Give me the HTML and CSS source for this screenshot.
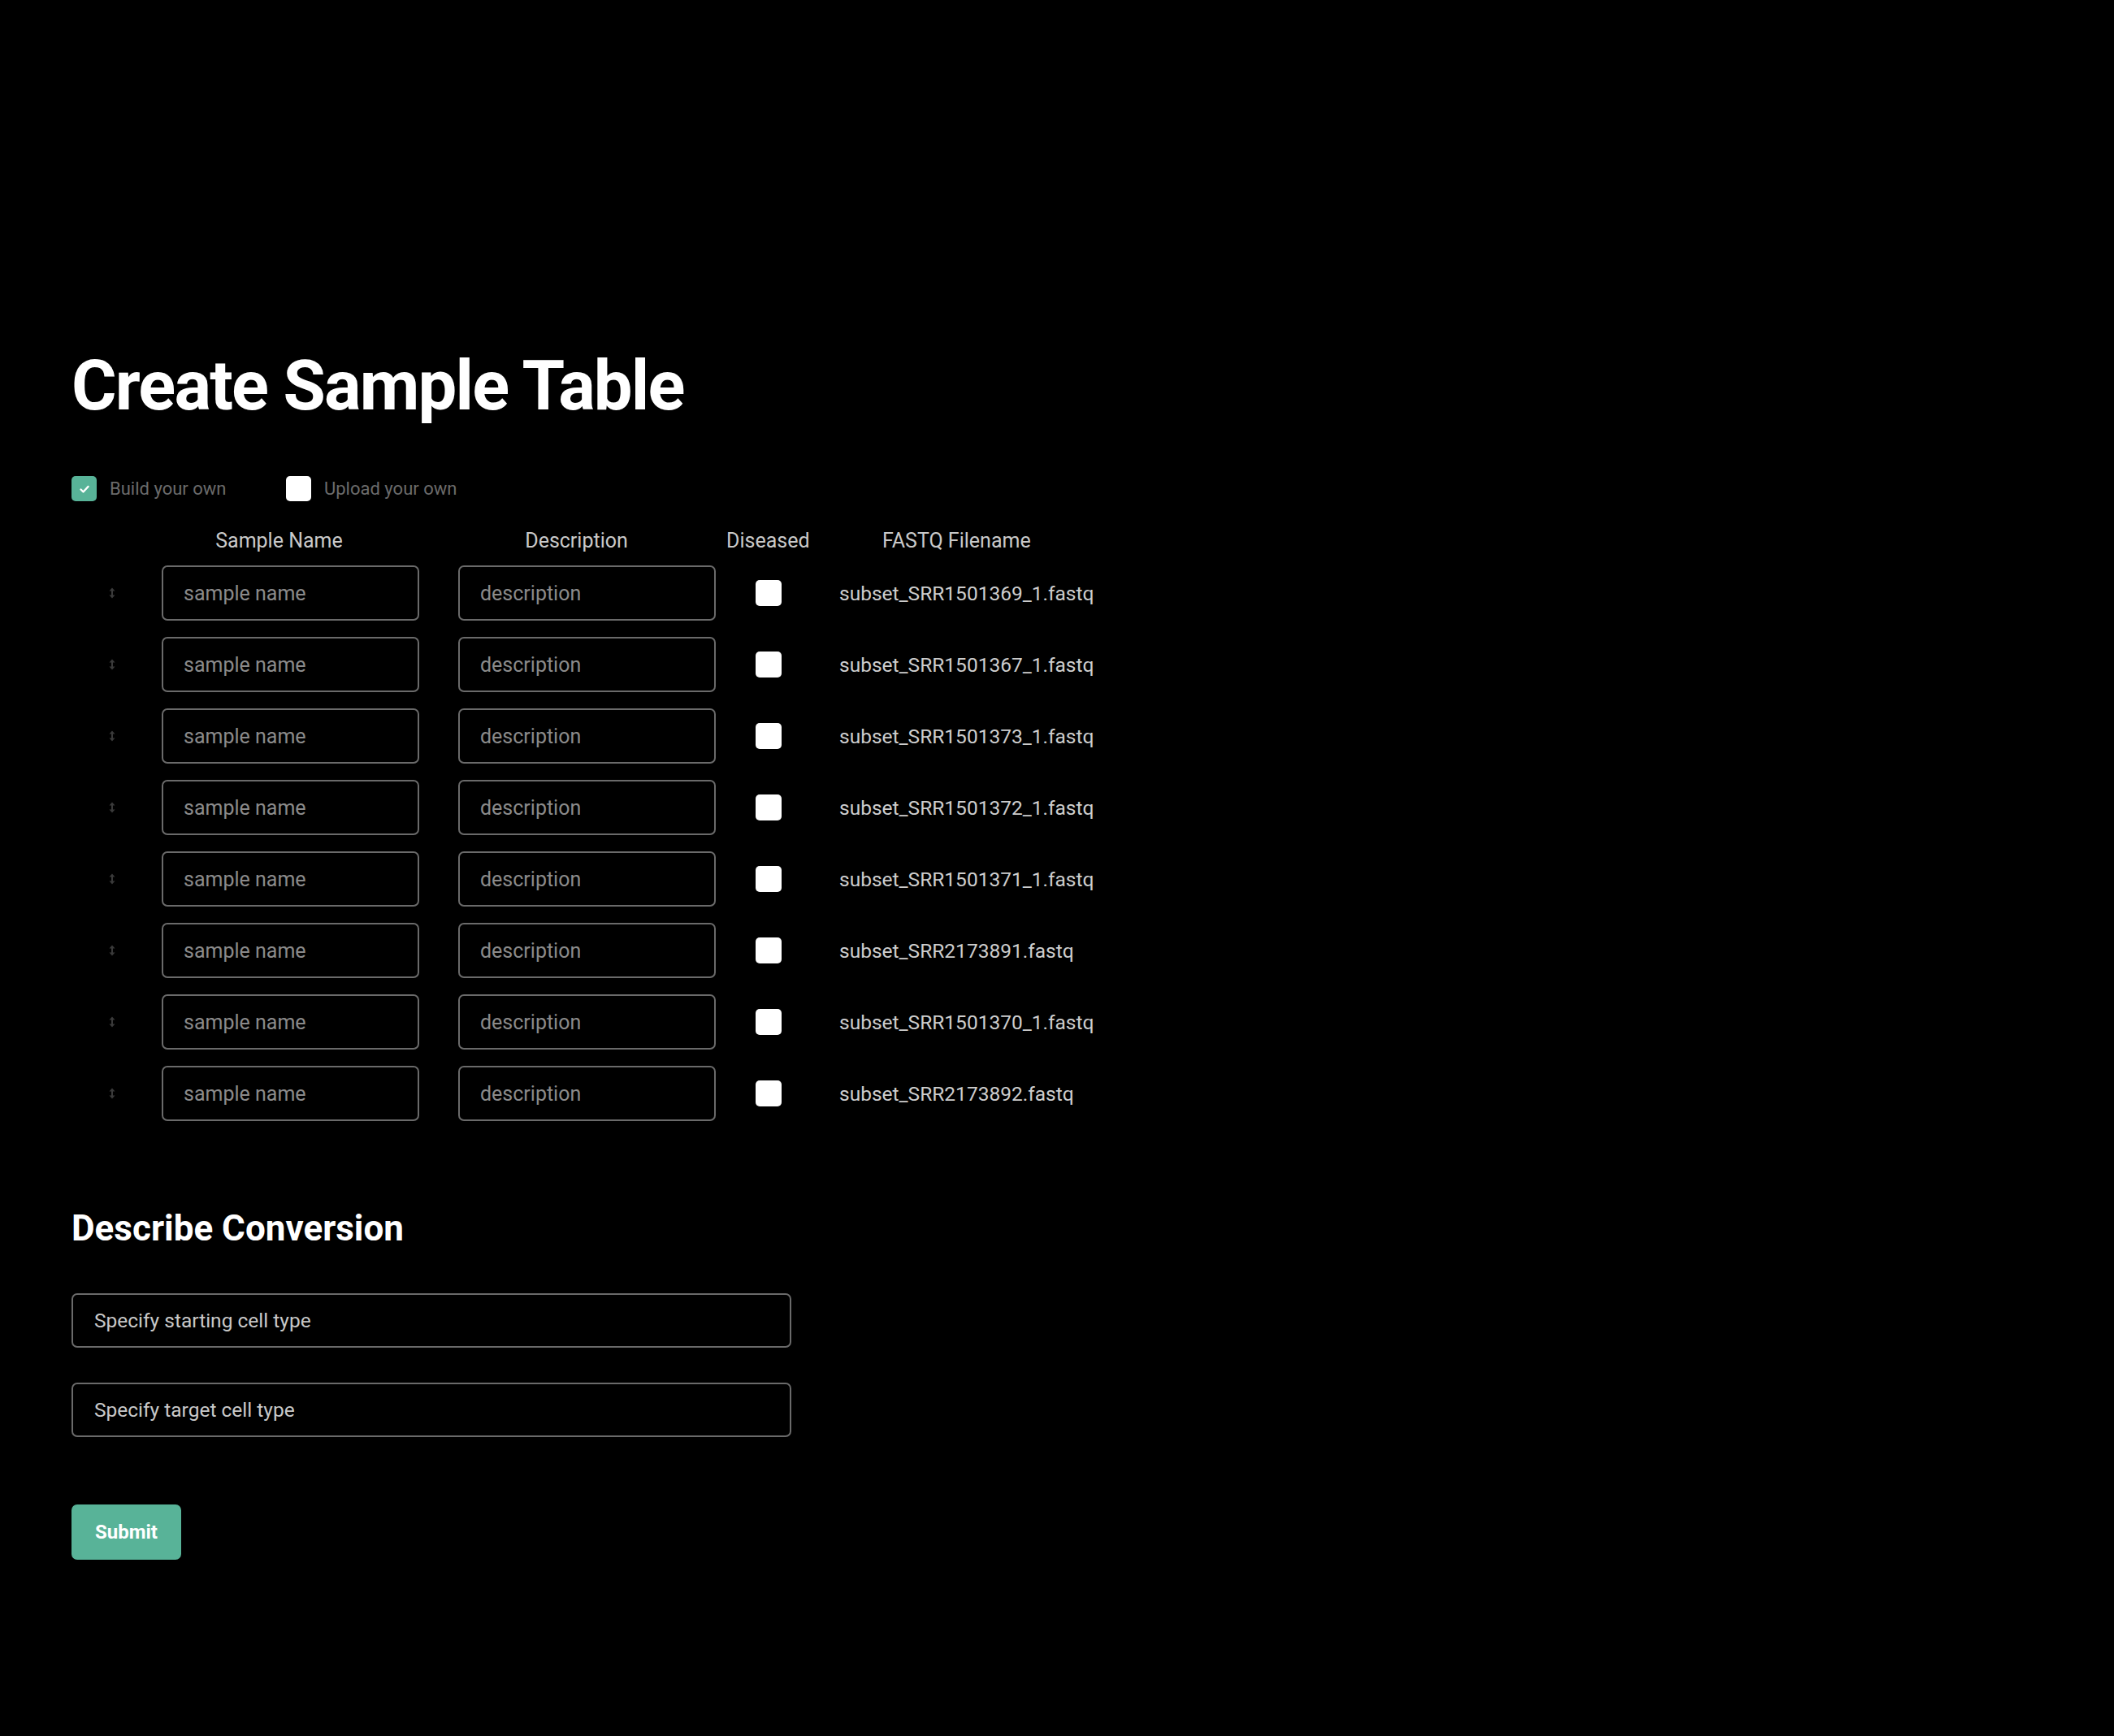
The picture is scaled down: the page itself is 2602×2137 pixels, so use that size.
FILE: index.html
```html
<!DOCTYPE html>
<html lang="en">
<head>
<meta charset="utf-8">
<title>Create Sample Table</title>
<link rel="stylesheet" href="styles.css">
</head>
<body>
<main class="page">
  <h1 class="title">Create Sample Table</h1>

  <div class="mode-row">
    <label class="mode mode-first">
      <span class="box box-checked">
        <svg viewBox="0 0 16 16" width="16" height="16"><path d="M3.5 8.5l3 3 6-6.5" fill="none" stroke="#fff" stroke-width="2.4" stroke-linecap="round" stroke-linejoin="round"/></svg>
      </span>
      <span class="mode-text">Build your own</span>
    </label>
    <label class="mode">
      <span class="box"></span>
      <span class="mode-text">Upload your own</span>
    </label>
  </div>

  <div class="table">
    <div class="th"></div>
    <div class="th th-name">Sample Name</div>
    <div class="th th-desc">Description</div>
    <div class="th th-dis">Diseased</div>
    <div class="th th-file">FASTQ Filename</div>

    <div class="handle"><svg viewBox="0 0 8 14" width="8" height="14"><path d="M4 0.5L7.5 4.5H0.5Z M4 13.5L7.5 9.5H0.5Z" fill="#3a3a3a"/><rect x="3" y="4" width="2" height="6" fill="#3a3a3a"/></svg></div>
    <div class="cell"><input class="cell-input" placeholder="sample name"></div>
    <div class="cell cell-desc"><input class="cell-input" placeholder="description"></div>
    <div class="dis"><span class="wbox"></span></div>
    <div class="file">subset_SRR1501369_1.fastq</div>

    <div class="handle"><svg viewBox="0 0 8 14" width="8" height="14"><path d="M4 0.5L7.5 4.5H0.5Z M4 13.5L7.5 9.5H0.5Z" fill="#3a3a3a"/><rect x="3" y="4" width="2" height="6" fill="#3a3a3a"/></svg></div>
    <div class="cell"><input class="cell-input" placeholder="sample name"></div>
    <div class="cell cell-desc"><input class="cell-input" placeholder="description"></div>
    <div class="dis"><span class="wbox"></span></div>
    <div class="file">subset_SRR1501367_1.fastq</div>

    <div class="handle"><svg viewBox="0 0 8 14" width="8" height="14"><path d="M4 0.5L7.5 4.5H0.5Z M4 13.5L7.5 9.5H0.5Z" fill="#3a3a3a"/><rect x="3" y="4" width="2" height="6" fill="#3a3a3a"/></svg></div>
    <div class="cell"><input class="cell-input" placeholder="sample name"></div>
    <div class="cell cell-desc"><input class="cell-input" placeholder="description"></div>
    <div class="dis"><span class="wbox"></span></div>
    <div class="file">subset_SRR1501373_1.fastq</div>

    <div class="handle"><svg viewBox="0 0 8 14" width="8" height="14"><path d="M4 0.5L7.5 4.5H0.5Z M4 13.5L7.5 9.5H0.5Z" fill="#3a3a3a"/><rect x="3" y="4" width="2" height="6" fill="#3a3a3a"/></svg></div>
    <div class="cell"><input class="cell-input" placeholder="sample name"></div>
    <div class="cell cell-desc"><input class="cell-input" placeholder="description"></div>
    <div class="dis"><span class="wbox"></span></div>
    <div class="file">subset_SRR1501372_1.fastq</div>

    <div class="handle"><svg viewBox="0 0 8 14" width="8" height="14"><path d="M4 0.5L7.5 4.5H0.5Z M4 13.5L7.5 9.5H0.5Z" fill="#3a3a3a"/><rect x="3" y="4" width="2" height="6" fill="#3a3a3a"/></svg></div>
    <div class="cell"><input class="cell-input" placeholder="sample name"></div>
    <div class="cell cell-desc"><input class="cell-input" placeholder="description"></div>
    <div class="dis"><span class="wbox"></span></div>
    <div class="file">subset_SRR1501371_1.fastq</div>

    <div class="handle"><svg viewBox="0 0 8 14" width="8" height="14"><path d="M4 0.5L7.5 4.5H0.5Z M4 13.5L7.5 9.5H0.5Z" fill="#3a3a3a"/><rect x="3" y="4" width="2" height="6" fill="#3a3a3a"/></svg></div>
    <div class="cell"><input class="cell-input" placeholder="sample name"></div>
    <div class="cell cell-desc"><input class="cell-input" placeholder="description"></div>
    <div class="dis"><span class="wbox"></span></div>
    <div class="file">subset_SRR2173891.fastq</div>

    <div class="handle"><svg viewBox="0 0 8 14" width="8" height="14"><path d="M4 0.5L7.5 4.5H0.5Z M4 13.5L7.5 9.5H0.5Z" fill="#3a3a3a"/><rect x="3" y="4" width="2" height="6" fill="#3a3a3a"/></svg></div>
    <div class="cell"><input class="cell-input" placeholder="sample name"></div>
    <div class="cell cell-desc"><input class="cell-input" placeholder="description"></div>
    <div class="dis"><span class="wbox"></span></div>
    <div class="file">subset_SRR1501370_1.fastq</div>

    <div class="handle"><svg viewBox="0 0 8 14" width="8" height="14"><path d="M4 0.5L7.5 4.5H0.5Z M4 13.5L7.5 9.5H0.5Z" fill="#3a3a3a"/><rect x="3" y="4" width="2" height="6" fill="#3a3a3a"/></svg></div>
    <div class="cell"><input class="cell-input" placeholder="sample name"></div>
    <div class="cell cell-desc"><input class="cell-input" placeholder="description"></div>
    <div class="dis"><span class="wbox"></span></div>
    <div class="file">subset_SRR2173892.fastq</div>
  </div>

  <h2 class="subtitle">Describe Conversion</h2>

  <div class="conv">
    <input class="conv-input" placeholder="Specify starting cell type">
    <input class="conv-input" placeholder="Specify target cell type">
  </div>

  <button class="submit" type="button">Submit</button>
</main>
</body>
</html>
```

FILE: styles.css
```css
html, body {
  margin: 0;
  padding: 0;
  background: #000;
}

body {
  font-family: Roboto, "Liberation Sans", sans-serif;
  color: #fff;
  min-height: 2137px;
}

.page {
  padding: 432px 0 0 88px;
}

.title {
  margin: 0;
  font-size: 85px;
  line-height: 87px;
  font-weight: 700;
  color: #fff;
  letter-spacing: -1.8px;
}

.mode-row {
  display: flex;
  align-items: center;
  margin-top: 67px;
  height: 31px;
}

.mode {
  display: flex;
  align-items: center;
  gap: 16px;
}

.mode-first {
  width: 264px;
}

.box {
  width: 31px;
  height: 31px;
  border-radius: 5px;
  background: #fff;
  display: flex;
  align-items: center;
  justify-content: center;
  flex: none;
}

.box-checked {
  background: #58b398;
}

.mode-text {
  font-size: 22px;
  color: #6b6b6b;
  line-height: 31px;
}

.table {
  display: grid;
  grid-template-columns: 111px 317px 365px 112px 400px;
  row-gap: 20px;
  margin-top: 34px;
}

.th {
  font-size: 25px;
  line-height: 30px;
  color: #c9c9c9;
  margin-bottom: -5px;
}

.th-name {
  text-align: center;
  padding-right: 28px;
}

.th-desc {
  text-align: center;
  padding-left: 48px;
  padding-right: 26px;
}

.th-dis {
  text-align: center;
  padding-left: 13px;
}

.th-file {
  padding-left: 93px;
}

.handle {
  display: flex;
  align-items: center;
  padding-left: 46px;
  height: 68px;
}

.cell {
  display: flex;
  height: 68px;
}

.cell-desc {
  justify-content: flex-end;
}

.cell-input {
  box-sizing: border-box;
  width: 317px;
  height: 68px;
  background: #000;
  border: 2px solid #6a6a6a;
  border-radius: 7px;
  padding: 0 0 0 25px;
  font-family: Roboto, "Liberation Sans", sans-serif;
  font-size: 25px;
  color: #ccc;
  outline: none;
}

.cell-input::placeholder {
  color: #8a8a8a;
}

.dis {
  display: flex;
  align-items: center;
  justify-content: center;
  height: 68px;
  padding-left: 17px;
}

.wbox {
  width: 32px;
  height: 32px;
  border-radius: 5px;
  background: #fff;
}

.file {
  display: flex;
  align-items: center;
  height: 68px;
  padding-left: 40px;
  font-size: 24.5px;
  color: #cdcdcd;
  white-space: nowrap;
}

.subtitle {
  margin: 106px 0 0;
  font-size: 44px;
  line-height: 53px;
  font-weight: 700;
  color: #fff;
}

.conv {
  display: flex;
  flex-direction: column;
  gap: 43px;
  margin-top: 53px;
  width: 886px;
}

.conv-input {
  box-sizing: border-box;
  height: 67px;
  width: 886px;
  background: #000;
  border: 2px solid #6a6a6a;
  border-radius: 7px;
  padding: 0 0 0 26px;
  font-family: Roboto, "Liberation Sans", sans-serif;
  font-size: 24.5px;
  color: #ccc;
  outline: none;
}

.conv-input::placeholder {
  color: #c8c8c8;
}

.submit {
  display: block;
  margin-top: 83px;
  width: 135px;
  height: 68px;
  border: none;
  border-radius: 7px;
  background: #58b398;
  color: #fff;
  font-family: Roboto, "Liberation Sans", sans-serif;
  font-weight: 700;
  font-size: 24px;
  padding: 0;
}
```
